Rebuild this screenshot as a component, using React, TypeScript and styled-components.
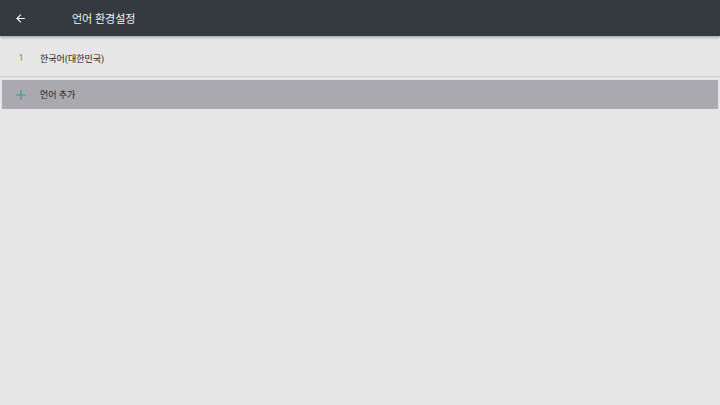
import React, { FC } from "react";
import styled, { createGlobalStyle, css } from "styled-components";

const GlobalStyle = createGlobalStyle`
  html, body {
    margin: 0;
    padding: 0;
    background: #e6e6e6;
  }
  body {
    font-family: Roboto, "Noto Sans CJK KR", "Noto Sans", sans-serif;
  }
`;

type RowProps = {
    selected?: boolean;
};

const languages = ["한국어(대한민국)"];

const App: FC = () => {
    return (
        <React.Fragment>
            <GlobalStyle />
            <Page>
                <Toolbar>
                    <BackButton aria-label="back">
                        <svg width="13" height="13" viewBox="0 0 24 24">
                            <path
                                d="M20 11H7.83l5.59-5.59L12 4l-8 8 8 8 1.41-1.41L7.83 13H20v-2z"
                                fill="#ffffff"
                            />
                        </svg>
                    </BackButton>
                    <Title>언어 환경설정</Title>
                </Toolbar>

                <List>
                    {languages.map((name, i) => (
                        <Row key={name}>
                            <Lead>{i + 1}</Lead>
                            <Label>{name}</Label>
                        </Row>
                    ))}
                    <Divider />
                    <Row selected>
                        <Lead>
                            <svg width="10" height="10" viewBox="0 0 10 10">
                                <path d="M5 0v10M0 5h10" stroke="#3f9f86" strokeWidth="1.2" />
                            </svg>
                        </Lead>
                        <Label>언어 추가</Label>
                    </Row>
                </List>
            </Page>
        </React.Fragment>
    );
};

export default App;

const Page = styled.div`
  width: 720px;
  height: 405px;
  background: #e6e6e6;
  display: flex;
  flex-direction: column;
  overflow: hidden;
`;

const Toolbar = styled.header`
  height: 36px;
  flex-shrink: 0;
  background: #353a41;
  display: flex;
  align-items: center;
  box-shadow: 0 1px 3px rgba(0, 0, 0, 0.35);
  position: relative;
  z-index: 1;
`;

const BackButton = styled.div`
  width: 40px;
  height: 36px;
  display: flex;
  align-items: center;
  justify-content: center;
`;

const Title = styled.h1`
  margin: 0 0 0 32px;
  font-size: 11px;
  font-weight: 400;
  color: #f4f4f4;
`;

const List = styled.div`
  display: flex;
  flex-direction: column;
  padding: 4px 2px 0;
`;

const Row = styled.div<RowProps>`
  height: 36px;
  display: flex;
  align-items: center;
  color: #222222;

  ${props => props.selected &&
        css`
      height: 29px;
      background: #aaa9b0;
      margin-top: -1px;
    `}
`;

const Lead = styled.span`
  width: 38px;
  display: flex;
  justify-content: center;
  font-size: 9px;
  color: #3f9f86;
`;

const Label = styled.span`
  font-size: 9px;
  color: #222222;
`;

const Divider = styled.div`
  height: 1px;
  background: #d0d0d0;
  margin: 0 -2px 4px;
`;
